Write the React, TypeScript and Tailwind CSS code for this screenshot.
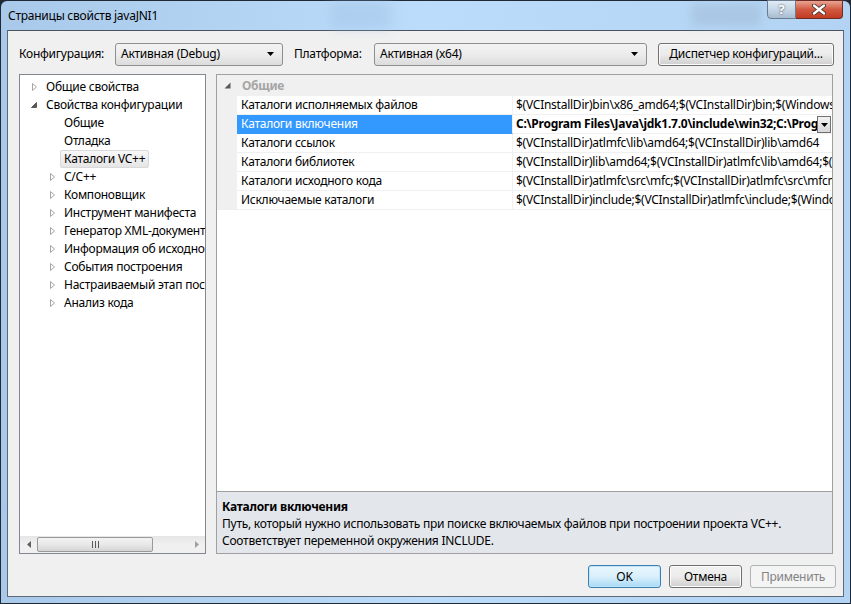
import React from "react";

const font = { fontFamily: '"Noto Sans", "Open Sans", sans-serif' };

function Collapsed() {
  return (
    <svg width="16" height="16" viewBox="0 0 16 16">
      <path d="M6.5 4.5 L10.5 8 L6.5 11.5 Z" fill="#fff" stroke="#a6a6a6" strokeWidth="1" />
    </svg>
  );
}
function Expanded() {
  return (
    <svg width="16" height="16" viewBox="0 0 16 16">
      <path d="M10.5 5.5 L10.5 10.5 L5.5 10.5 Z" fill="#595959" stroke="#595959" strokeWidth="1" strokeLinejoin="round" />
    </svg>
  );
}
function ComboArrow() {
  return (
    <svg width="8" height="5" viewBox="0 0 8 5">
      <path d="M0 0 H7 L3.5 4 Z" fill="#000" />
    </svg>
  );
}

type TreeItem = { label: string; level: number; exp?: "c" | "e"; selected?: boolean };
const tree: TreeItem[] = [
  { label: "Общие свойства", level: 0, exp: "c" },
  { label: "Свойства конфигурации", level: 0, exp: "e" },
  { label: "Общие", level: 1 },
  { label: "Отладка", level: 1 },
  { label: "Каталоги VC++", level: 1, selected: true },
  { label: "C/C++", level: 1, exp: "c" },
  { label: "Компоновщик", level: 1, exp: "c" },
  { label: "Инструмент манифеста", level: 1, exp: "c" },
  { label: "Генератор XML-документов", level: 1, exp: "c" },
  { label: "Информация об исходном коде", level: 1, exp: "c" },
  { label: "События построения", level: 1, exp: "c" },
  { label: "Настраиваемый этап построения", level: 1, exp: "c" },
  { label: "Анализ кода", level: 1, exp: "c" },
];

const rows = [
  { name: "Каталоги исполняемых файлов", value: "$(VCInstallDir)bin\\x86_amd64;$(VCInstallDir)bin;$(WindowsSdkDir)bin\\NETFX 4.0 Tools;$(WindowsSdkDir)bin" },
  { name: "Каталоги включения", value: "C:\\Program Files\\Java\\jdk1.7.0\\include\\win32;C:\\Program Files\\Java\\jdk1.7.0\\include", sel: true },
  { name: "Каталоги ссылок", value: "$(VCInstallDir)atlmfc\\lib\\amd64;$(VCInstallDir)lib\\amd64" },
  { name: "Каталоги библиотек", value: "$(VCInstallDir)lib\\amd64;$(VCInstallDir)atlmfc\\lib\\amd64;$(WindowsSdkDir)lib\\x64" },
  { name: "Каталоги исходного кода", value: "$(VCInstallDir)atlmfc\\src\\mfc;$(VCInstallDir)atlmfc\\src\\mfcm;$(VCInstallDir)atlmfc\\src\\atl" },
  { name: "Исключаемые каталоги", value: "$(VCInstallDir)include;$(VCInstallDir)atlmfc\\include;$(WindowsSdkDir)include" },
];

function Combo({ w, text }: { w: string; text: string }) {
  return (
    <div className={`${w} h-[23px] flex items-center justify-between pl-[5px] pr-[7px] rounded-[3px] border border-[#8e8f8f] bg-gradient-to-b from-[#f3f3f3] via-[#ececec] to-[#dcdcdc] text-[12px] text-black`}>
      <span>{text}</span>
      <ComboArrow />
    </div>
  );
}

function Button({ w, text, variant }: { w: string; text: string; variant?: "default" | "disabled" }) {
  const base = `${w} h-[23px] flex items-center justify-center rounded-[3px] text-[12px]`;
  if (variant === "disabled")
    return <div className={`${base} border border-[#adb2b5] bg-[#f4f4f4] text-[#838383]`}>{text}</div>;
  if (variant === "default")
    return (
      <div className={`${base} border border-[#3c7fb1] bg-gradient-to-b from-[#eaf6fd] via-[#d9f0fc] to-[#a7d9f5] text-black shadow-[inset_0_0_0_1px_#bde6fd]`}>
        {text}
      </div>
    );
  return (
    <div className={`${base} border border-[#707070] bg-gradient-to-b from-[#f2f2f2] via-[#ebebeb] to-[#cfcfcf] text-black shadow-[inset_0_0_0_1px_#fcfcfc]`}>
      {text}
    </div>
  );
}

export default function App() {
  return (
    <div className="w-[851px] h-[604px] overflow-hidden bg-[#1f2a36] p-px tracking-[-0.25px]" style={font}>
      <div className="w-full h-full flex flex-col bg-gradient-to-r from-[#a9c9ea] via-[#bcdcfb] to-[#b2d3f3] rounded-t-[6px] relative">
        {/* title bar */}
        <div className="h-[29px] flex items-center pl-[7px] relative">
          <span className="text-[12px] text-black leading-none">Страницы свойств javaJNI1</span>
          <div className="absolute left-[690px] top-[3px] w-[70px] h-[22px] bg-[#9ab4cc] opacity-40 blur-[5px]" />
          <div className="absolute left-[330px] top-[0px] w-[60px] h-[28px] bg-[#9ec0e2] opacity-40 blur-[6px]" />
          <div className="absolute left-[766px] top-[-1px] flex">
            <div className="w-[29px] h-[19px] rounded-bl-[4px] border border-[#6b7c8e] bg-gradient-to-b from-[#e0ebf5] via-[#c5d6e6] to-[#a9bdd1] flex items-center justify-center text-[13px] font-bold text-white [text-shadow:0_0_2px_#333]">
              ?
            </div>
            <div className="w-[47px] h-[19px] rounded-br-[4px] border border-l-0 border-[#6b2a22] bg-gradient-to-b from-[#e8a493] via-[#d0583f] to-[#c23a22] flex items-center justify-center">
              <svg width="14" height="11" viewBox="0 0 14 11">
                <path d="M2 1.5 L12 9.5 M12 1.5 L2 9.5" stroke="#3a2a2a" strokeWidth="4" strokeLinecap="round" />
                <path d="M2 1.5 L12 9.5 M12 1.5 L2 9.5" stroke="#fff" strokeWidth="2.4" strokeLinecap="round" />
              </svg>
            </div>
          </div>
        </div>
        <div className="flex-1 flex px-[6px] pb-[6px]">
          {/* client */}
          <div className="flex-1 flex flex-col bg-[#f0f0f0] border border-[#5e6a78] border-t-[#4a5460]">
            {/* config row */}
            <div className="mt-[11px] ml-[11px] h-[24px] flex items-center text-[12px] text-black">
              <span className="w-[96px]">Конфигурация:</span>
              <Combo w="w-[168px]" text="Активная (Debug)" />
              <span className="ml-[11px] w-[80px]">Платформа:</span>
              <Combo w="w-[273px]" text="Активная (x64)" />
              <div className="ml-[11px]">
                <Button w="w-[176px]" text="Диспетчер конфигураций..." />
              </div>
            </div>
            {/* panels */}
            <div className="mt-[8px] ml-[11px] h-[480px] flex">
              {/* tree */}
              <div className="w-[187px] h-full border border-[#828790] bg-white flex flex-col">
                <div className="flex-1 pt-[3px] overflow-hidden">
                  {tree.map((t, i) => (
                    <div key={i} className="h-[18px] flex items-center whitespace-nowrap">
                      <div className={t.level === 0 ? "w-[6px] shrink-0" : "w-[24px] shrink-0"} />
                      <div className="w-[16px] h-[16px] shrink-0">
                        {t.exp === "c" ? <Collapsed /> : t.exp === "e" ? <Expanded /> : null}
                      </div>
                      <span
                        className={
                          t.selected
                            ? "h-[18px] px-[3px] flex items-center rounded-[2px] border border-[#d9d9d9] bg-gradient-to-b from-[#f8f8f8] to-[#e5e5e5] text-[12px] text-black"
                            : "h-[18px] px-[3px] flex items-center border border-transparent text-[12px] text-black"
                        }
                      >
                        {t.label}
                      </span>
                    </div>
                  ))}
                </div>
                {/* scrollbar */}
                <div className="h-[17px] bg-gradient-to-b from-[#e6e6e6] via-[#f0f0f0] to-[#f0f0f0] flex items-center">
                  <div className="w-[17px] h-full flex items-center justify-center">
                    <svg width="4" height="7" viewBox="0 0 4 7"><path d="M4 0 V7 L0 3.5 Z" fill="#606060" /></svg>
                  </div>
                  <div className="w-[116px] h-[15px] rounded-[2px] border border-[#9a9a9a] bg-gradient-to-b from-[#f3f3f3] via-[#e8e8e8] to-[#d5d5d5] flex items-center justify-center gap-[2px]">
                    <div className="w-px h-[7px] bg-[#5a5a5a]" />
                    <div className="w-px h-[7px] bg-[#5a5a5a]" />
                    <div className="w-px h-[7px] bg-[#5a5a5a]" />
                  </div>
                  <div className="flex-1" />
                  <div className="w-[17px] h-full flex items-center justify-center">
                    <svg width="4" height="7" viewBox="0 0 4 7"><path d="M0 0 V7 L4 3.5 Z" fill="#a0a0a0" /></svg>
                  </div>
                </div>
              </div>
              {/* property grid */}
              <div className="ml-[10px] w-[617px] h-full border border-[#a0a0a0] bg-white flex flex-col">
                <div className="flex-1 overflow-hidden">
                  <div className="h-[21px] bg-[#f0f0f0] flex items-center">
                    <div className="w-[20px] flex justify-center">
                      <svg width="7" height="7" viewBox="0 0 7 7"><path d="M6.5 0.5 V6.5 H0.5 Z" fill="#595959" /></svg>
                    </div>
                    <span className="ml-[5px] text-[12px] font-bold text-[#a5a5a5]">Общие</span>
                  </div>
                  {rows.map((r, i) => (
                    <div key={i} className="h-[19px] flex">
                      <div className="w-[20px] bg-[#f0f0f0] shrink-0" />
                      <div
                        className={
                          r.sel
                            ? "w-[276px] shrink-0 bg-[#3399ff] text-white border-b border-[#3399ff] border-r border-r-[#f0f0f0] pl-[4px] text-[12px] leading-[18px] whitespace-nowrap overflow-hidden"
                            : "w-[276px] shrink-0 border-b border-[#f0f0f0] border-r pl-[4px] text-[12px] leading-[18px] text-black whitespace-nowrap overflow-hidden"
                        }
                      >
                        {r.name}
                      </div>
                      <div className="flex-1 min-w-0 border-b border-[#f0f0f0] flex">
                        <div
                          className={
                            r.sel
                              ? "flex-1 min-w-0 pl-[3px] text-[12px] leading-[18px] font-bold text-black whitespace-nowrap overflow-hidden"
                              : "flex-1 min-w-0 pl-[3px] text-[12px] leading-[18px] text-black whitespace-nowrap overflow-hidden"
                          }
                        >
                          {r.value}
                        </div>
                        {r.sel && (
                          <div className="w-[14px] h-[17px] mt-px mr-px border border-[#707070] bg-gradient-to-b from-[#f2f2f2] to-[#d8d8d8] flex items-center justify-center">
                            <svg width="7" height="4" viewBox="0 0 7 4"><path d="M0 0 H7 L3.5 4 Z" fill="#000" /></svg>
                          </div>
                        )}
                      </div>
                    </div>
                  ))}
                </div>
                <div className="h-[62px] border-t border-[#a0a0a0] bg-[#e3e6eb] pl-[5px] pt-[6px] text-[12px] text-black leading-[17px]">
                  <div className="font-bold">Каталоги включения</div>
                  <div>Путь, который нужно использовать при поиске включаемых файлов при построении проекта VC++.</div>
                  <div>Соответствует переменной окружения INCLUDE.</div>
                </div>
              </div>
            </div>
            {/* buttons */}
            <div className="mt-[11px] h-[23px] flex justify-end gap-[8px] pr-[7px]">
              <Button w="w-[73px]" text="OK" variant="default" />
              <Button w="w-[73px]" text="Отмена" />
              <Button w="w-[86px]" text="Применить" variant="disabled" />
            </div>
          </div>
        </div>
      </div>
    </div>
  );
}
